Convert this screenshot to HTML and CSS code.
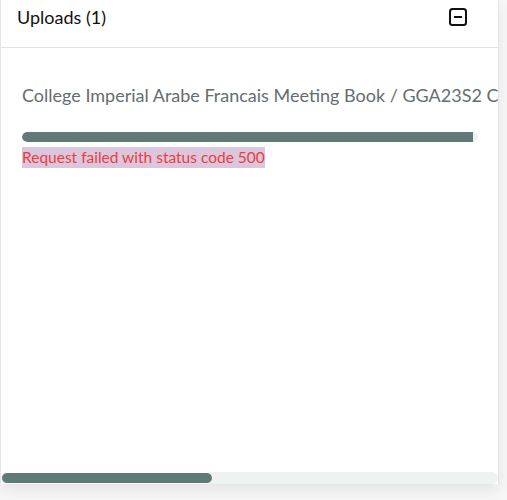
FILE: index.html
```html
<!DOCTYPE html>
<html lang="en">
<head>
<meta charset="utf-8">
<title>Uploads</title>
<link rel="stylesheet" href="styles.css">
</head>
<body>
<section class="panel">
  <header class="panel-head">
    <h2 class="panel-title">Uploads (1)</h2>
    <button class="collapse-btn" aria-label="Collapse">
      <svg width="18" height="18" viewBox="0 0 18 18" fill="none">
        <rect x="1" y="1" width="16" height="16" rx="2.5" stroke="#111" stroke-width="2"/>
        <line x1="5" y1="9" x2="13" y2="9" stroke="#111" stroke-width="2"/>
      </svg>
    </button>
  </header>
  <div class="panel-body">
    <div class="upload-item">
      <div class="file-name">College Imperial Arabe Francais Meeting Book / GGA23S2 Cohort Documents / Session Agenda and Minutes (Final Version) - Shared Copy 2023.pdf</div>
      <div class="progress"><div class="progress-fill" style="width: 99%"></div></div>
      <div class="error"><span class="error-text">Request failed with status code 500</span></div>
    </div>
  </div>
  <div class="hscroll" aria-hidden="true"><div class="hscroll-thumb"></div></div>
</section>
</body>
</html>
```

FILE: styles.css
```css
* { box-sizing: border-box; }

html, body {
  margin: 0;
  padding: 0;
}

body {
  background: #f7f7f8;
  font-family: Lato, "Open Sans", sans-serif;
  width: 507px;
  height: 500px;
  overflow: hidden;
}

.panel {
  width: 499px;
  height: 484px;
  background: #fff;
  border-left: 1px solid #e4e4ec;
  border-right: 1px solid #e4e4ec;
  box-shadow: 0 6px 14px rgba(0, 0, 0, 0.08);
  display: flex;
  flex-direction: column;
}

.panel-head {
  height: 48px;
  flex: 0 0 48px;
  display: flex;
  align-items: center;
  justify-content: space-between;
  padding: 0 31px 0 16px;
  border-bottom: 1px solid #e2e2e6;
}

.panel-title {
  margin: 0 0 14px 0;
  font-size: 18px;
  font-weight: 400;
  color: #111;
}

.collapse-btn {
  border: 0;
  background: none;
  padding: 0;
  margin-bottom: 14px;
  width: 18px;
  height: 18px;
  display: flex;
}

.panel-body {
  flex: 1;
  overflow: hidden;
}

.upload-item {
  padding: 35px 20px 0 21px;
}

.file-name {
  white-space: nowrap;
  font-size: 18px;
  line-height: 24px;
  color: #656d6f;
}

.progress {
  margin-top: 25px;
  width: 456px;
  height: 10px;
  background: #eff1f1;
  border-radius: 5px;
  overflow: hidden;
}

.progress-fill {
  height: 100%;
  background: #607a77;
  border-radius: 5px 0 0 5px;
}

.error {
  margin-top: 5px;
}

.error-text {
  display: inline-block;
  background: #dcc6de;
  color: #e8403b;
  font-size: 15.5px;
  line-height: 21px;
}

.hscroll {
  flex: 0 0 12px;
  height: 12px;
  background: #eef2f1;
  border-radius: 6px;
  display: flex;
}

.hscroll-thumb {
  width: 212px;
  height: 100%;
  background: #607a77;
  border: 1px solid #fff;
  border-radius: 6px;
}
```
